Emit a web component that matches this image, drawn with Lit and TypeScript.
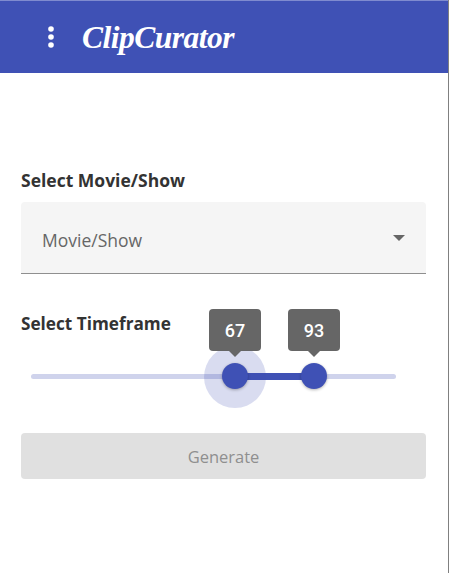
import { LitElement, html, css } from "lit";
import { customElement } from "lit/decorators.js";

@customElement("app-root")
export class AppRoot extends LitElement {
  static styles = css`
    :host {
      display: block;
      width: 449px;
      height: 573px;
      box-sizing: border-box;
      background: #fff;
      border-right: 1px solid #808080;
      font-family: "Open Sans", "Noto Sans", sans-serif;
      color: #333;
      overflow: hidden;
    }
    .bar {
      height: 72px;
      background: #3f51b5;
      border-top: 1px solid #7f8bcf;
      display: flex;
      align-items: center;
      padding-left: 48px;
      gap: 28px;
    }
    .dots { width: 6px; height: 24px; display: block; flex: none; }
    .logo {
      font-family: "Liberation Serif", serif;
      font-style: italic;
      font-weight: 700;
      font-size: 31.5px;
      letter-spacing: -0.5px;
      color: #fff;
      line-height: 1;
      padding-top: 2px;
    }
    .main {
      padding: 96px 22px 0 21px;
      display: flex;
      flex-direction: column;
    }
    .label { font-size: 17.5px; font-weight: 700; line-height: 22px; color: #333; }
    .label.short { font-size: 17.2px; }
    .select {
      margin-top: 11px;
      height: 71px;
      background: #f5f5f5;
      border-radius: 4px 4px 0 0;
      border-bottom: 1px solid #8f8f8f;
      display: flex;
      align-items: center;
      justify-content: space-between;
      padding: 0 21px;
      font-size: 17.5px;
      color: #666;
    }
    .select span:first-child { padding-top: 4px; }
    .arrow {
      width: 0; height: 0;
      border-left: 6px solid transparent;
      border-right: 6px solid transparent;
      border-top: 6px solid #666;
    }
    .time { position: relative; height: 120px; margin-top: 39px; }
    .track {
      position: absolute; left: 10px; width: 365px; top: 61px; height: 5px;
      background: #cfd3ec; border-radius: 3px;
    }
    .fill { position: absolute; left: 214px; width: 78px; top: 60px; height: 7px; background: #3f51b5; }
    .halo { position: absolute; left: 183px; top: 33px; width: 62px; height: 62px; border-radius: 50%; background: rgba(63,81,181,.2); }
    .thumb {
      position: absolute; top: 50px; width: 26px; height: 26px; border-radius: 50%;
      background: #3f51b5; box-shadow: 0 1px 3px rgba(0,0,0,.3);
    }
    .tip {
      position: absolute; top: -4px; width: 52px; height: 42px; border-radius: 4px;
      background: #666; color: #fff; font-family: Roboto, sans-serif; font-size: 18px; font-weight: 500;
      display: flex; align-items: center; justify-content: center;
    }
    .tip::after {
      content: ""; position: absolute; left: 50%; bottom: -6px; margin-left: -6px;
      border-left: 6px solid transparent; border-right: 6px solid transparent; border-top: 6px solid #666;
    }
    .go {
      height: 46px; background: #e0e0e0; border-radius: 4px; color: #8f8f8f;
      font-size: 16.5px; display: flex; align-items: center; justify-content: center;
    }
  `;
  render() {
    return html`
      <div class="bar">
        <svg class="dots" viewBox="0 0 6 24"><circle cx="3" cy="4" r="2.8" fill="#fff"/><circle cx="3" cy="12" r="2.8" fill="#fff"/><circle cx="3" cy="20" r="2.8" fill="#fff"/></svg>
        <div class="logo">ClipCurator</div>
      </div>
      <div class="main">
        <div class="label">Select Movie/Show</div>
        <div class="select"><span>Movie/Show</span><span class="arrow"></span></div>
        <div class="time">
          <div class="label short">Select Timeframe</div>
          <div class="track"></div>
          <div class="fill"></div>
          <div class="halo"></div>
          <div class="tip" style="left:188px">67</div>
          <div class="tip" style="left:267px">93</div>
          <div class="thumb" style="left:201px"></div>
          <div class="thumb" style="left:280px"></div>
        </div>
        <div class="go">Generate</div>
      </div>
    `;
  }
}
